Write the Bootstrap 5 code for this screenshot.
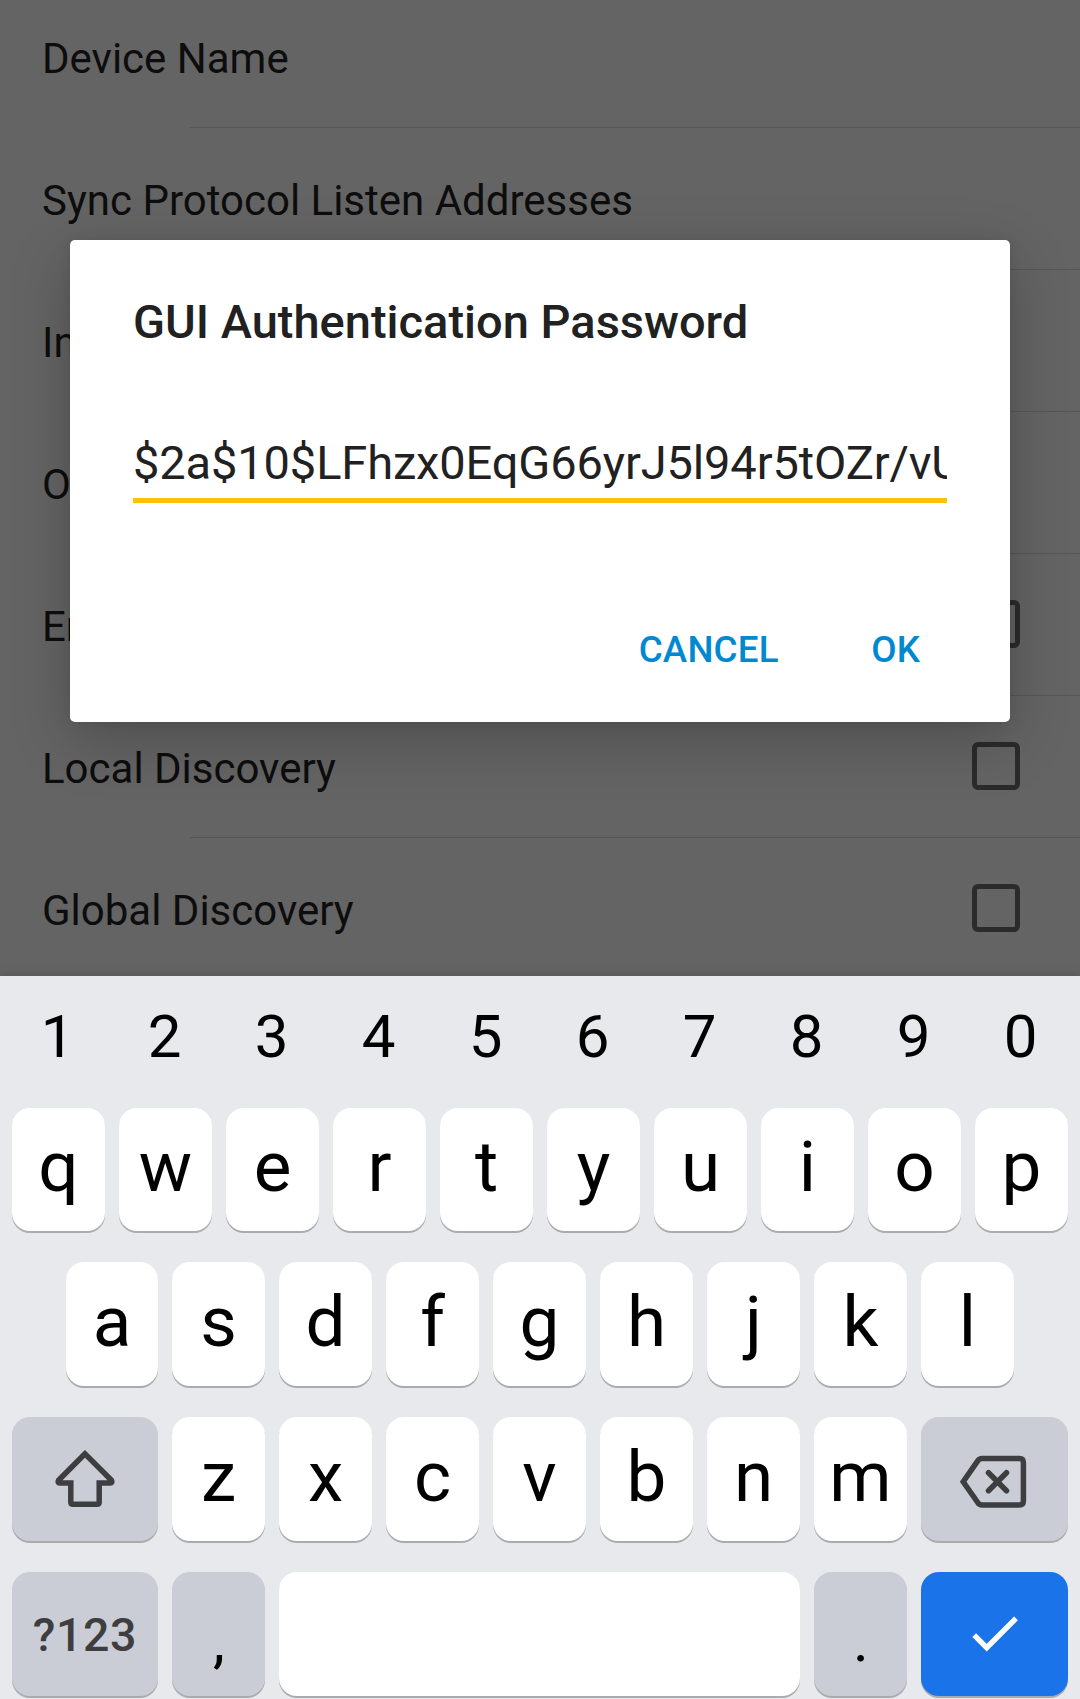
<!DOCTYPE html>
<html lang="en">
<head>
<meta charset="utf-8">
<meta name="viewport" content="width=device-width, initial-scale=1">
<title>GUI Authentication Password</title>
<link href="https://cdn.jsdelivr.net/npm/bootstrap@5.3.0/dist/css/bootstrap.min.css" rel="stylesheet">
<style>
body{font-family:Roboto,"Noto Sans",sans-serif;background:#646464;overflow:hidden}
.screen{width:1080px;height:1699px}
.settings{height:976px;background:#646464}
.setting{height:142px;flex:none;padding:4px 60px 0 42px;font-size:42px;line-height:50px;color:#0d0d0d;white-space:nowrap}
.setting:first-child{height:128px;padding-top:0;padding-bottom:10px}
.setting::after{content:"";position:absolute;left:190px;right:0;bottom:0;height:1px;background:#565656}
.check-square{width:48px;height:48px;border:5.5px solid #2b2b2b;border-radius:6px;margin-top:-6px}
.dialog-box{left:70px;top:240px;width:940px;height:482px;background:#fff;border-radius:5px;padding:0 63px;box-shadow:0 18px 60px rgba(0,0,0,.22),0 0 12px rgba(0,0,0,.08);color:#212121}
.dialog-title{font-size:47px;font-weight:500;line-height:56px;margin:54px 0 0;letter-spacing:0;white-space:nowrap}
.secret{margin-top:76px;height:77px;padding:9px 0 0;border-bottom:5px solid #ffc107;font-size:47px;letter-spacing:-.13px;line-height:56px;white-space:nowrap;overflow:hidden}
.actions{margin-top:125px;gap:92.5px;padding-right:27px;font-size:36.75px;letter-spacing:.15px;line-height:44px;font-weight:500;color:#0288d1}
.keyboard{height:723px;background:#e8e9ed;padding:0 12px;color:#000;box-shadow:0 0 10px rgba(0,0,0,.2)}
.digits{height:121px;margin:0 0 11px -1px;font-size:60px;gap:14px}
.digits span{width:93px}
.key-row{gap:14px;height:124px;margin-bottom:31px}
.key-row.first-row{height:123px}
.key{width:93px;background:#fff;border-radius:18px;box-shadow:0 2px 0 #a9abae;font-size:71px;line-height:1;padding-bottom:6px;flex:none}
.home-row{padding-left:54px}
.home-row .key:first-child{width:92px}
.key-wide{width:146px;padding:0}
.key-go{width:147px;background:#1a73e9;padding:0}
.key-fn{background:#cbcdd6;color:#3e3e40}
.punct{color:#000;padding:13px 0 0 1px;font-size:60px}
.mode{font-size:46.5px;font-weight:500;letter-spacing:.6px;padding-top:2px}
</style>
<script src="https://cdn.jsdelivr.net/npm/bootstrap@5.3.0/dist/js/bootstrap.bundle.min.js"></script>
</head>
<body>
<div class="screen position-relative overflow-hidden d-flex flex-column">
  <main class="settings d-flex flex-column overflow-hidden">
    <div class="setting position-relative d-flex align-items-center justify-content-between">Device Name</div>
    <div class="setting position-relative d-flex align-items-center justify-content-between">Sync Protocol Listen Addresses</div>
    <div class="setting position-relative d-flex align-items-center justify-content-between">In</div>
    <div class="setting position-relative d-flex align-items-center justify-content-between">O</div>
    <div class="setting position-relative d-flex align-items-center justify-content-between">En<span class="check-square"></span></div>
    <div class="setting position-relative d-flex align-items-center justify-content-between">Local Discovery<span class="check-square"></span></div>
    <div class="setting position-relative d-flex align-items-center justify-content-between">Global Discovery<span class="check-square"></span></div>
  </main>

  <div class="dialog-box position-absolute d-flex flex-column" role="dialog">
    <h1 class="dialog-title">GUI Authentication Password</h1>
    <div class="secret">$2a$10$LFhzx0EqG66yrJ5l94r5tOZr/vU</div>
    <div class="actions d-flex justify-content-end"><span>CANCEL</span><span>OK</span></div>
  </div>

  <section class="keyboard position-relative">
    <div class="digits d-flex align-items-center text-center"><span>1</span><span>2</span><span>3</span><span>4</span><span>5</span><span>6</span><span>7</span><span>8</span><span>9</span><span>0</span></div>
    <div class="key-row first-row d-flex">
      <div class="key d-flex align-items-center justify-content-center">q</div><div class="key d-flex align-items-center justify-content-center">w</div><div class="key d-flex align-items-center justify-content-center">e</div><div class="key d-flex align-items-center justify-content-center">r</div><div class="key d-flex align-items-center justify-content-center">t</div><div class="key d-flex align-items-center justify-content-center">y</div><div class="key d-flex align-items-center justify-content-center">u</div><div class="key d-flex align-items-center justify-content-center">i</div><div class="key d-flex align-items-center justify-content-center">o</div><div class="key d-flex align-items-center justify-content-center">p</div>
    </div>
    <div class="key-row home-row d-flex">
      <div class="key d-flex align-items-center justify-content-center">a</div><div class="key d-flex align-items-center justify-content-center">s</div><div class="key d-flex align-items-center justify-content-center">d</div><div class="key d-flex align-items-center justify-content-center">f</div><div class="key d-flex align-items-center justify-content-center">g</div><div class="key d-flex align-items-center justify-content-center">h</div><div class="key d-flex align-items-center justify-content-center">j</div><div class="key d-flex align-items-center justify-content-center">k</div><div class="key d-flex align-items-center justify-content-center">l</div>
    </div>
    <div class="key-row d-flex">
      <div class="key key-wide key-fn"><svg class="d-block" width="146" height="124" fill="none" stroke="#3e3e40" stroke-width="5.5"><path d="M73 36.800 46.600 63.200Q45 66 48 66H58.800V85.200Q58.800 87.200 60.800 87.200H85.200Q87.200 87.200 87.200 85.200V66H98Q101 66 99.400 63.200Z"/></svg></div>
      <div class="key d-flex align-items-center justify-content-center">z</div><div class="key d-flex align-items-center justify-content-center">x</div><div class="key d-flex align-items-center justify-content-center">c</div><div class="key d-flex align-items-center justify-content-center">v</div><div class="key d-flex align-items-center justify-content-center">b</div><div class="key d-flex align-items-center justify-content-center">n</div><div class="key d-flex align-items-center justify-content-center">m</div>
      <div class="key key-go key-fn"><svg class="d-block" width="147" height="124" fill="none" stroke="#3e3e40" stroke-width="5.5"><path d="M61 41.400H98.500Q102.400 41.400 102.400 45.300V84.100Q102.400 88 98.500 88H61Q58.300 88 56.700 85.500L42.200 64.700 56.700 43.900Q58.300 41.400 61 41.400Z"/><path d="M67.500 55.700 85.500 73.700M85.500 55.700 67.500 73.700" stroke-linecap="round"/></svg></div>
    </div>
    <div class="key-row d-flex">
      <div class="key key-wide key-fn mode d-flex align-items-center justify-content-center">?123</div>
      <div class="key key-fn punct d-flex align-items-center justify-content-center">,</div>
      <div class="key flex-fill"></div>
      <div class="key key-fn punct d-flex align-items-center justify-content-center">.</div>
      <div class="key key-go"><svg class="d-block" width="147" height="124" fill="none" stroke="#fff" stroke-width="5.400"><path d="M53.200 63.200 65.700 75.600 95 46.300"/></svg></div>
    </div>
  </section>
</div>
</body>
</html>
